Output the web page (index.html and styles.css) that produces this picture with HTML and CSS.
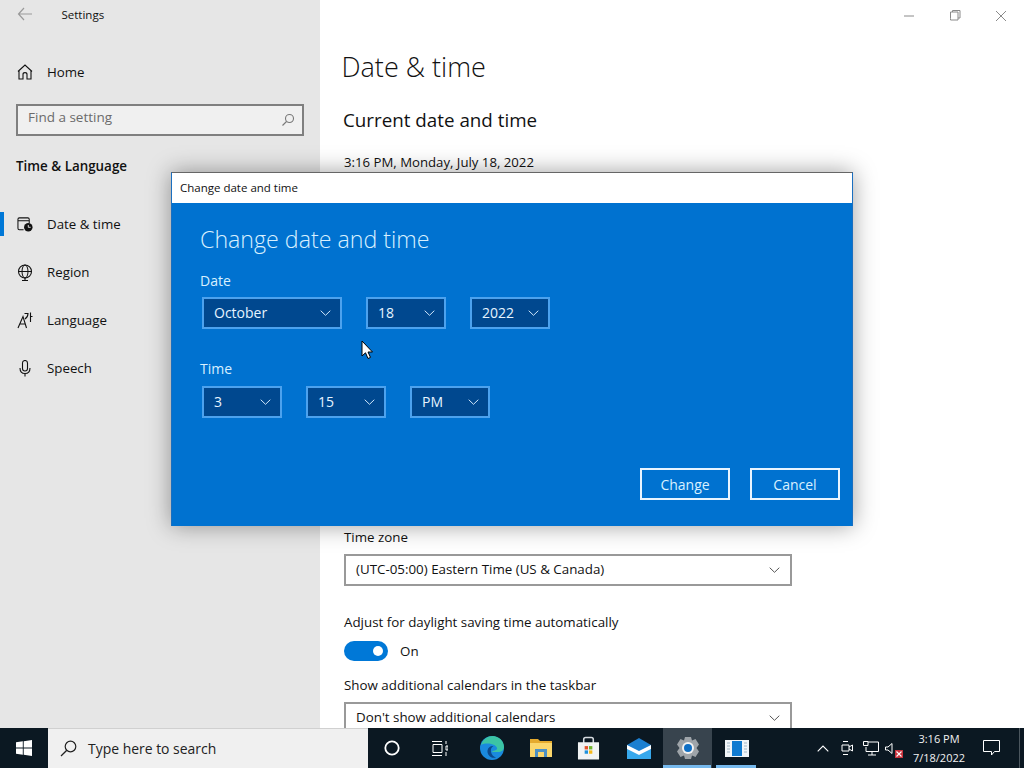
FILE: index.html
```html
<!DOCTYPE html>
<html lang="en">
<head>
<meta charset="utf-8">
<title>Settings</title>
<link rel="stylesheet" href="styles.css">
</head>
<body>
<div class="desktop">
  <div class="window">
    <aside class="sidebar">
      <div class="appbar">
        <svg class="back" width="16" height="14" viewBox="0 0 16 14"><path d="M7 1 1.500 7 7 13M1.500 7H15" fill="none" stroke="#9a9a9a" stroke-width="1.200"/></svg>
        <span class="apptitle">Settings</span>
      </div>
      <div class="navitem home">
        <svg class="navicon" width="16" height="16" viewBox="0 0 16 16"><path d="M1 7.500 8 1l7 6.500M2 6.500V15h4v-4.500c0-2.500 4-2.500 4 0V15h4V6.500" fill="none" stroke="#111" stroke-width="1.100"/></svg>
        <span>Home</span>
      </div>
      <div class="search">
        <span>Find a setting</span>
        <svg width="14" height="14" viewBox="0 0 14 14"><circle cx="8.500" cy="5.500" r="4" fill="none" stroke="#777" stroke-width="1.100"/><path d="M5.500 8.500 1.500 12.500" stroke="#777" stroke-width="1.100"/></svg>
      </div>
      <div class="section">Time &amp; Language</div>
      <nav class="nav">
        <div class="navitem selected">
          <svg class="navicon" width="16" height="16" viewBox="0 0 17 16"><path d="M7 14H2.500Q1 14 1 12.500V3Q1 1.500 2.500 1.500H11.500Q13 1.500 13 3V7M1 4.500H13" fill="none" stroke="#111" stroke-width="1.100"/><circle cx="12" cy="11.500" r="4.500" fill="#111"/><path d="M12 9v2.500h2.500" fill="none" stroke="#e6e6e6" stroke-width="1"/></svg>
          <span>Date &amp; time</span>
        </div>
        <div class="navitem">
          <svg class="navicon" width="16" height="17" viewBox="0 0 16 17"><circle cx="8" cy="7.500" r="6.500" fill="none" stroke="#111" stroke-width="1.100"/><ellipse cx="8" cy="7.500" rx="3" ry="6.500" fill="none" stroke="#111"/><path d="M1.500 7.500H14.500M8 14V16.500M5 16.500H11" fill="none" stroke="#111" stroke-width="1.100"/></svg>
          <span>Region</span>
        </div>
        <div class="navitem">
          <svg class="navicon" width="16" height="17" viewBox="0 0 16 17"><path d="M1 16 6 4.500 9.500 16M2.800 12H8.500M7.500 1.500H11Q11 5 8 7M13.500 0.500V10M13.500 4.500H15.500" fill="none" stroke="#111" stroke-width="1.100"/></svg>
          <span>Language</span>
        </div>
        <div class="navitem">
          <svg class="navicon" width="16" height="17" viewBox="0 0 16 17"><rect x="5.500" y="0.500" width="5" height="10.500" rx="2.500" fill="none" stroke="#111" stroke-width="1.100"/><path d="M3 8Q3 13.500 8 13.500T13 8M8 13.500V16.500" fill="none" stroke="#111" stroke-width="1.100"/></svg>
          <span>Speech</span>
        </div>
      </nav>
    </aside>
    <main class="content">
      <div class="controls">
        <svg width="46" height="32" viewBox="0 0 46 32"><path d="M18 16H28" stroke="#8a8a8a"/></svg>
        <svg width="46" height="32" viewBox="0 0 46 32"><path d="M18.500 18.500V12H26V20H18.500V18.500M20.500 12V10.500H28V18H26" fill="none" stroke="#8a8a8a"/></svg>
        <svg width="46" height="32" viewBox="0 0 46 32"><path d="M18 11 28 21M28 11 18 21" stroke="#8a8a8a"/></svg>
      </div>
      <h1 class="pagetitle">Date &amp; time</h1>
      <h2 class="subtitle">Current date and time</h2>
      <p class="now">3:16 PM, Monday, July 18, 2022</p>
      <div class="field tz">
        <div class="label">Time zone</div>
        <div class="select"><span>(UTC-05:00) Eastern Time (US &amp; Canada)</span><svg class="chev" width="11" height="6" viewBox="0 0 11 6"><path d="M.7.700 5.500 5.300 10.300.700" fill="none" stroke="#555" stroke-width="1"/></svg></div>
      </div>
      <div class="field dst">
        <div class="label">Adjust for daylight saving time automatically</div>
        <div class="toggle-row"><span class="toggle"><span class="knob"></span></span><span>On</span></div>
      </div>
      <div class="field cal">
        <div class="label">Show additional calendars in the taskbar</div>
        <div class="select"><span>Don't show additional calendars</span><svg class="chev" width="11" height="6" viewBox="0 0 11 6"><path d="M.7.700 5.500 5.300 10.300.700" fill="none" stroke="#555" stroke-width="1"/></svg></div>
      </div>
    </main>
  </div>

  <section class="dialog">
    <div class="dialog-title">Change date and time</div>
    <div class="dialog-body">
      <h3 class="dialog-heading">Change date and time</h3>
      <div class="dlabel">Date</div>
      <div class="picks">
        <div class="pick w140"><span>October</span><svg width="11" height="6" viewBox="0 0 11 6"><path d="M.7.700 5.500 5.300 10.300.700" fill="none" stroke="#cfe6fa" stroke-width="1"/></svg></div>
        <div class="pick"><span>18</span><svg width="11" height="6" viewBox="0 0 11 6"><path d="M.7.700 5.500 5.300 10.300.700" fill="none" stroke="#cfe6fa" stroke-width="1"/></svg></div>
        <div class="pick"><span>2022</span><svg width="11" height="6" viewBox="0 0 11 6"><path d="M.7.700 5.500 5.300 10.300.700" fill="none" stroke="#cfe6fa" stroke-width="1"/></svg></div>
      </div>
      <div class="dlabel second">Time</div>
      <div class="picks">
        <div class="pick"><span>3</span><svg width="11" height="6" viewBox="0 0 11 6"><path d="M.7.700 5.500 5.300 10.300.700" fill="none" stroke="#cfe6fa" stroke-width="1"/></svg></div>
        <div class="pick"><span>15</span><svg width="11" height="6" viewBox="0 0 11 6"><path d="M.7.700 5.500 5.300 10.300.700" fill="none" stroke="#cfe6fa" stroke-width="1"/></svg></div>
        <div class="pick"><span>PM</span><svg width="11" height="6" viewBox="0 0 11 6"><path d="M.7.700 5.500 5.300 10.300.700" fill="none" stroke="#cfe6fa" stroke-width="1"/></svg></div>
      </div>
      <div class="actions">
        <div class="btn">Change</div>
        <div class="btn">Cancel</div>
      </div>
    </div>
  </section>

  <svg class="cursor" width="13" height="20" viewBox="0 0 13 20"><path d="M1 1V16L4.500 12.800 7 18.500 9.500 17.400 7 12H11.500Z" fill="#fff" stroke="#000" stroke-width="1"/></svg>

  <footer class="taskbar">
    <div class="start">
      <svg width="16" height="16" viewBox="0 0 16 16"><path d="M0 2.300 6.800 1.300V7.500H0ZM7.700 1.200 16 0V7.500H7.700ZM0 8.400H6.800V14.700L0 13.700ZM7.700 8.400H16V16L7.700 14.800Z" fill="#fff"/></svg>
    </div>
    <div class="tsearch">
      <svg width="17" height="17" viewBox="0 0 17 17"><circle cx="10.500" cy="6.500" r="5.300" fill="none" stroke="#222" stroke-width="1.200"/><path d="M6.800 10.300 1 16" stroke="#222" stroke-width="1.300"/></svg>
      <span>Type here to search</span>
    </div>
    <div class="cell">
      <svg width="16" height="16" viewBox="0 0 16 16"><circle cx="8" cy="8" r="6.700" fill="none" stroke="#fff" stroke-width="1.800"/></svg>
    </div>
    <div class="cell">
      <svg width="16" height="15" viewBox="0 0 16 15"><path d="M0 .5H10M0 14.500H10M1 3.500H10V11.500H1ZM14 0V3M14 5H16V9H14V5ZM14 11V15" fill="none" stroke="#fff" stroke-width="1"/></svg>
    </div>
    <div class="app first">
      <svg width="24" height="24" viewBox="0 0 24 24"><circle cx="12" cy="12" r="12" fill="#1a8ade"/><path d="M1 9C3 3 8 0 12.500 0 19 0 24 5 24 11c0 3-2.500 5-6 5h-6c0-2 6-1 5-4-1-4-11-6-16-3Z" fill="#3cc4a4"/><path d="M16 21.500C11 23 7 19 7.500 14.500 8 11 11 9.500 13.500 10c-2 1-3 3-2.500 6 .5 3 3 5 5 5.500Z" fill="#0c4a8c"/></svg>
    </div>
    <div class="app">
      <svg width="22" height="18" viewBox="0 0 22 18"><path d="M0 0H8L10 2H22V18H0Z" fill="#e5aa2e"/><path d="M0 4H22V18H0Z" fill="#fbd66c"/><path d="M5 18V10H17V18H14V13H8V18Z" fill="#4d90c4"/></svg>
    </div>
    <div class="app store">
      <svg width="23" height="24" viewBox="0 0 24 24"><path d="M7 7V3Q7 1 9 1H15Q17 1 17 3V7" fill="none" stroke="#d6dbe0" stroke-width="1.600"/><path d="M1 6H23V24H1Z" fill="#f1f3f4"/><path d="M8 10H11.500V13.500H8Z" fill="#e5532a"/><path d="M12.500 10H16V13.500H12.500Z" fill="#6fb42c"/><path d="M8 14.500H11.500V18H8Z" fill="#1e90dc"/><path d="M12.500 14.500H16V18H12.500Z" fill="#f6b91a"/></svg>
    </div>
    <div class="app">
      <svg width="24" height="21" viewBox="0 0 24 21"><path d="M0 7 12 0 24 7V21H0Z" fill="#1b7fd0"/><path d="M0 11 12 17 24 11V21H0Z" fill="#37a8ec"/><path d="M0 7 12 13 24 7V11L12 17 0 11Z" fill="#fff"/></svg>
    </div>
    <div class="app active">
      <svg width="24" height="24" viewBox="0 0 24 24"><path d="M9 1H15L16 4.500 19.500 3 23 8.500 20.500 12 23 15.500 19.500 21 16 19.500 15 23H9L8 19.500 4.500 21 1 15.500 3.500 12 1 8.500 4.500 3 8 4.500Z" fill="#9ea4a9"/><circle cx="12" cy="12" r="6" fill="#f2f2f2"/><circle cx="12" cy="12" r="4" fill="#0f6fc4"/></svg>
    </div>
    <div class="app last">
      <svg width="24" height="17" viewBox="0 0 24 17"><path d="M0 0H24V17H0Z" fill="#f1f5f8"/><path d="M7 1H17V16H7Z" fill="#0f7ad0"/><path d="M2 3H5M2 6H5M2 9H5M2 12H5M19 3H22M19 6H22M19 9H22M19 12H22" stroke="#9fb6c6"/></svg>
    </div>
    <div class="tray">
      <div class="tcell"><svg width="12" height="7" viewBox="0 0 12 7"><path d="M.7 6.300 6 1 11.300 6.300" fill="none" stroke="#fff" stroke-width="1.100"/></svg></div>
      <div class="tcell"><svg width="12" height="16" viewBox="0 0 12 16"><path d="M2 1.500H7M2 14.500H7M1 5H8V11H1ZM8 7 11.500 5V11L8 9" fill="none" stroke="#fff"/></svg></div>
      <div class="tcell"><svg width="16" height="15" viewBox="0 0 16 15"><path d="M4 1H15.500V10.500H3V6M9 10.500V14M5 14H13" fill="none" stroke="#fff"/><path d="M.5.500H5V4.500H.5Z" fill="#0d1a24" stroke="#fff"/></svg></div>
      <div class="tcell sound">
        <svg width="20" height="17" viewBox="0 0 20 17"><path d="M.5 5H3L7 1.500V11.500L3 8H.5Z" fill="none" stroke="#fff"/><rect x="10" y="8" width="8" height="8" fill="#c8323c"/><path d="M11.500 9.500 16.500 14.500M16.500 9.500 11.500 14.500" stroke="#fff" stroke-width="1.100"/></svg>
      </div>
      <div class="clock"><span>3:16 PM</span><span>7/18/2022</span></div>
      <div class="notify"><svg width="17" height="16" viewBox="0 0 17 16"><path d="M.5.500H16.500V11.500H11.500L8.500 15V11.500H.5Z" fill="none" stroke="#fff"/></svg></div>
      <div class="peek"></div>
    </div>
  </footer>
</div>
</body>
</html>
```

FILE: styles.css
```css
* { box-sizing: border-box; }
html, body { margin: 0; height: 100%; }
body { font-family: "Open Sans", "Liberation Sans", sans-serif; color: #111; overflow: hidden; }
h1, h2, h3, p { margin: 0; font-weight: normal; }

.desktop { position: relative; width: 1024px; height: 768px; display: flex; flex-direction: column; overflow: hidden; background: #fff; }
.window { flex: 1; min-height: 0; display: flex; overflow: hidden; }

.sidebar { width: 320px; flex: none; background: #e6e6e6; display: flex; flex-direction: column; }
.appbar { height: 32px; display: flex; align-items: center; padding: 0 0 4px 17px; }
.apptitle { margin-left: 28.500px; font-size: 11.500px; }
.navitem { height: 48px; display: flex; align-items: center; padding-left: 17px; font-size: 13.300px; position: relative; }
.navitem .navicon { margin-right: 14px; flex: none; }
.home { margin-top: 16px; }
.search { margin: 8px 16px 0; height: 32px; border: 2px solid #7f7f7f; background: #f0f0f0; display: flex; align-items: center; justify-content: space-between; padding: 0 7px 0 10px; font-size: 13.500px; color: #6b6b6b; }
.search span { margin-bottom: 6px; }
.section { margin: 20px 16px 0; height: 20px; line-height: 20px; font-size: 13.400px; font-weight: 600; }
.nav { margin-top: 24px; display: flex; flex-direction: column; }
.selected::before { content: ""; position: absolute; left: 0; top: 12px; width: 4px; height: 24px; background: #0078d7; }

.content { flex: 1; position: relative; padding-left: 22px; }
.controls { position: absolute; top: 0; right: 0; display: flex; }
.pagetitle { font-size: 27px; font-weight: 300; line-height: 36px; margin: 49px 0 0 -.5px; }
.subtitle { font-size: 18.800px; line-height: 28px; margin: 21px 0 0 1px; }
.now { font-size: 13.200px; line-height: 20px; margin: 18px 0 0 2px; }
.field { margin-left: 2px; font-size: 13.350px; width: 448px; }
.label { line-height: 20px; }
.tz { margin-top: 355px; }
.dst { margin-top: 26px; }
.cal { margin-top: 14px; }
.select { margin-top: 7px; height: 32px; border: 2px solid #999; padding: 0 10px; display: flex; align-items: center; justify-content: space-between; }
.select span { margin-bottom: 2px; }
.toggle-row { margin-top: 9px; display: flex; align-items: center; gap: 12px; height: 20px; }
.toggle { width: 44px; height: 20px; border-radius: 10px; background: #0078d7; display: flex; align-items: center; justify-content: flex-end; padding-right: 5px; }
.knob { width: 10px; height: 10px; border-radius: 50%; background: #fff; }

.dialog { position: absolute; left: 171px; top: 172px; width: 682px; height: 354px; display: flex; flex-direction: column; box-shadow: 0 0 22px rgba(0,0,0,.38); border: 1px solid #555; border-top-color: #666; border-bottom: 0; border-left-color: #1a6fc0; border-right-color: #1a6fc0; }
.dialog-title { height: 30px; flex: none; background: #fff; font-size: 11.500px; line-height: 29px; padding-left: 8px; }
.dialog-body { flex: 1; background: #0072d0; padding: 20px 12px 0 28px; display: flex; flex-direction: column; color: #d8f0ff; }
.dialog-heading { font-size: 23.200px; line-height: 32px; font-weight: 300; }
.dlabel { font-size: 14px; line-height: 20px; margin-top: 16px; }
.dlabel.second { margin-top: 30px; }
.picks { margin: 6px 0 0 2px; display: flex; gap: 24px; }
.second + .picks { margin-top: 7px; }
.pick { width: 80px; height: 32px; background: #00488f; border: 2px solid #4ca2ee; padding: 0 9px 0 10px; display: flex; align-items: center; justify-content: space-between; font-size: 14px; color: #e6f4ff; }
.pick span { margin-bottom: 2px; }
.w140 { width: 140px; }
.actions { margin-top: 50px; display: flex; justify-content: flex-end; gap: 20px; }
.btn { width: 90px; height: 32px; border: 2px solid #e8f4ff; font-size: 14px; display: flex; align-items: center; justify-content: center; }

.cursor { position: absolute; left: 361px; top: 340px; }

.taskbar { height: 40px; flex: none; background: #0b1822; display: flex; align-items: stretch; color: #fff; }
.start { width: 48px; display: flex; align-items: center; justify-content: center; }
.tsearch { width: 320px; background: #f0f0f0; color: #222; display: flex; align-items: center; gap: 11px; padding-left: 12px; font-size: 13.950px; border-top: 1px solid #d0d0d0; }
.cell { width: 48px; display: flex; align-items: center; justify-content: center; }
.app { width: 49px; display: flex; align-items: center; justify-content: center; position: relative; }
.app.first { margin-left: 3px; }
.app.store { padding-right: 3px; }
.app.active { background: #38444e; }
.active::after, .last::after { content: ""; position: absolute; bottom: 0; height: 3px; background: #76b9ed; }
.active::after { left: 0; right: 1px; }
.last::after { left: 4px; right: 5px; }
.tray { margin-left: auto; display: flex; align-items: stretch; }
.tcell { width: 24px; display: flex; align-items: center; justify-content: center; }
.sound { padding-top: 4px; }
.clock { width: 64px; display: flex; flex-direction: column; align-items: center; justify-content: center; font-size: 11px; line-height: 19px; color: #f2f2f2; }
.notify { width: 40px; display: flex; align-items: center; justify-content: center; }
.peek { width: 13px; position: relative; }
.peek::before { content: ""; position: absolute; left: 8px; top: 0; bottom: 0; width: 1px; background: #4b565e; }
```
